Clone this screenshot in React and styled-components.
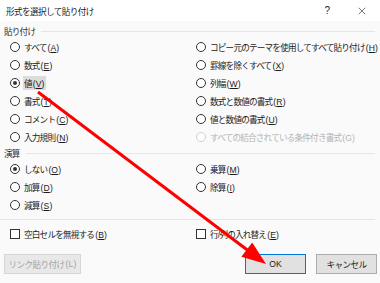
import React from 'react'
import styled, { createGlobalStyle } from 'styled-components'
import { X } from 'lucide-react'

const GlobalStyle = createGlobalStyle`
    html, body {
        margin: 0;
        padding: 0;
        background: #ffffff;
    }
`

const Dialog = styled.div`
    position: relative;
    width: 380px;
    height: 283px;
    overflow: hidden;
    background: #fafafa;
    font-family: "Liberation Sans", "Noto Sans CJK JP", sans-serif;
    font-size: 8.6px;
    letter-spacing: -0.8px;
    color: #1a1a1a;
    white-space: nowrap;
    display: flex;
    flex-direction: column;
`

const TitleBar = styled.div`
    height: 21px;
    background: #ffffff;
    display: flex;
    align-items: center;
    padding-left: 6px;
    padding-right: 6px;
    color: #222;
`

const Title = styled.div`
    flex: 1;
    letter-spacing: -0.6px;
`

const TitleButton = styled.div`
    width: 24px;
    display: flex;
    justify-content: center;
    align-items: center;
    margin-left: ${p => p.gap || 0}px;
    font-size: 10px;
`

const GroupHeader = styled.div`
    height: 14px;
    margin-top: ${p => p.top || 0}px;
    padding-left: 4px;
    display: flex;
    align-items: center;
    gap: 6px;
    color: #333;
    &::after {
        content: '';
        flex: 1;
        height: 1px;
        margin-right: 5px;
        background: #e6e6e6;
    }
`

const Columns = styled.div`
    display: grid;
    grid-template-columns: 192px 1fr;
`

const Column = styled.div`
    display: flex;
    flex-direction: column;
    padding-left: ${p => p.pad}px;
`

const Option = styled.div`
    height: 18px;
    display: flex;
    align-items: center;
    gap: 3px;
    color: ${p => (p.disabled ? '#b4b4b4' : '#1a1a1a')};
`

const Radio = styled.span`
    width: 8px;
    height: 8px;
    border-radius: 50%;
    border: 1px solid ${p => (p.disabled ? '#cfcfcf' : '#333')};
    background: #fff;
    display: flex;
    align-items: center;
    justify-content: center;
    flex-shrink: 0;
    &::after {
        content: '';
        width: 4px;
        height: 4px;
        border-radius: 50%;
        background: #333;
        display: ${p => (p.checked ? 'block' : 'none')};
    }
`

const Box = styled.span`
    width: 8px;
    height: 8px;
    border: 1px solid #333;
    background: #fff;
    flex-shrink: 0;
`

const Label = styled.span`
    padding: 1px 1px;
    background: ${p => (p.focus ? '#dcdcdc' : 'transparent')};
`

const Accel = styled.span`
    letter-spacing: 0.1px;
    margin-left: 1px;
    u {
        text-decoration: ${p => (p.plain ? 'none' : 'underline')};
        text-underline-offset: 1px;
    }
`

const Divider = styled.div`
    height: 1px;
    background: #e6e6e6;
    margin: 5px 5px 0 0;
`

const CheckRow = styled(Columns)`
    margin-top: 5px;
`

const ButtonRow = styled.div`
    display: flex;
    align-items: center;
    margin-top: 11px;
    padding: 0 3px 0 4px;
`

const Button = styled.div`
    height: 18px;
    width: ${p => p.w}px;
    margin-left: ${p => p.ml || 0}px;
    display: flex;
    align-items: center;
    justify-content: center;
    background: ${p => (p.disabled ? '#e8e8e8' : '#e1e1e1')};
    border: 1px solid ${p => (p.primary ? '#0078d7' : p.disabled ? '#d6d6d6' : '#adadad')};
    color: ${p => (p.disabled ? '#a3a3a3' : '#1a1a1a')};
    letter-spacing: ${p => (p.latin ? '0' : '-0.6px')};
`

const Spacer = styled.div`
    flex: 1;
`

const Overlay = styled.svg`
    position: absolute;
    left: 0;
    top: 0;
    pointer-events: none;
`

const Text = ({ text, k, plain, focus }) => (
    <Label focus={focus}>
        {text}
        <Accel plain={plain}>
            (<u>{k}</u>)
        </Accel>
    </Label>
)

const RadioOption = ({ text, k, checked, disabled, focus }) => (
    <Option disabled={disabled}>
        <Radio checked={checked} disabled={disabled} />
        <Text text={text} k={k} plain={disabled} focus={focus} />
    </Option>
)

const pasteLeft = [
    ['すべて', 'A'],
    ['数式', 'E'],
    ['値', 'V', true],
    ['書式', 'T'],
    ['コメント', 'C'],
    ['入力規則', 'N'],
]

const pasteRight = [
    ['コピー元のテーマを使用してすべて貼り付け', 'H'],
    ['罫線を除くすべて', 'X'],
    ['列幅', 'W'],
    ['数式と数値の書式', 'R'],
    ['値と数値の書式', 'U'],
    ['すべての結合されている条件付き書式', 'G', false, true],
]

const opLeft = [
    ['しない', 'O', true],
    ['加算', 'D'],
    ['減算', 'S'],
]

const opRight = [
    ['乗算', 'M'],
    ['除算', 'I'],
]

const renderList = list =>
    list.map(([text, k, checked, disabled]) => (
        <RadioOption
            key={text}
            text={text}
            k={k}
            checked={checked}
            disabled={disabled}
            focus={text === '値'}
        />
    ))

const App = () => {
    return (
        <Dialog>
            <GlobalStyle />
            <TitleBar>
                <Title>形式を選択して貼り付け</Title>
                <TitleButton>?</TitleButton>
                <TitleButton gap={11}>
                    <X size={12} strokeWidth={1.2} />
                </TitleButton>
            </TitleBar>

            <GroupHeader top={3}>貼り付け</GroupHeader>
            <Columns>
                <Column pad={10}>{renderList(pasteLeft)}</Column>
                <Column pad={4}>{renderList(pasteRight)}</Column>
            </Columns>

            <GroupHeader>演算</GroupHeader>
            <Columns>
                <Column pad={10}>{renderList(opLeft)}</Column>
                <Column pad={4}>{renderList(opRight)}</Column>
            </Columns>

            <Divider />
            <CheckRow>
                <Column pad={10}>
                    <Option>
                        <Box />
                        <Text text="空白セルを無視する" k="B" />
                    </Option>
                </Column>
                <Column pad={4}>
                    <Option>
                        <Box />
                        <Text text="行/列の入れ替え" k="E" />
                    </Option>
                </Column>
            </CheckRow>

            <ButtonRow>
                <Button w={75} disabled>
                    リンク貼り付け<Accel plain>(L)</Accel>
                </Button>
                <Spacer />
                <Button w={59} primary latin>OK</Button>
                <Button w={59} ml={10}>キャンセル</Button>
            </ButtonRow>

            <Overlay width="380" height="283" viewBox="0 0 380 283">
                <line x1="38" y1="92" x2="250" y2="252" stroke="#ff0000" strokeWidth="3" />
                <polygon points="266,264 252.2,242.4 241.4,256.8" fill="#ff0000" />
            </Overlay>
        </Dialog>
    )
}

export default App
